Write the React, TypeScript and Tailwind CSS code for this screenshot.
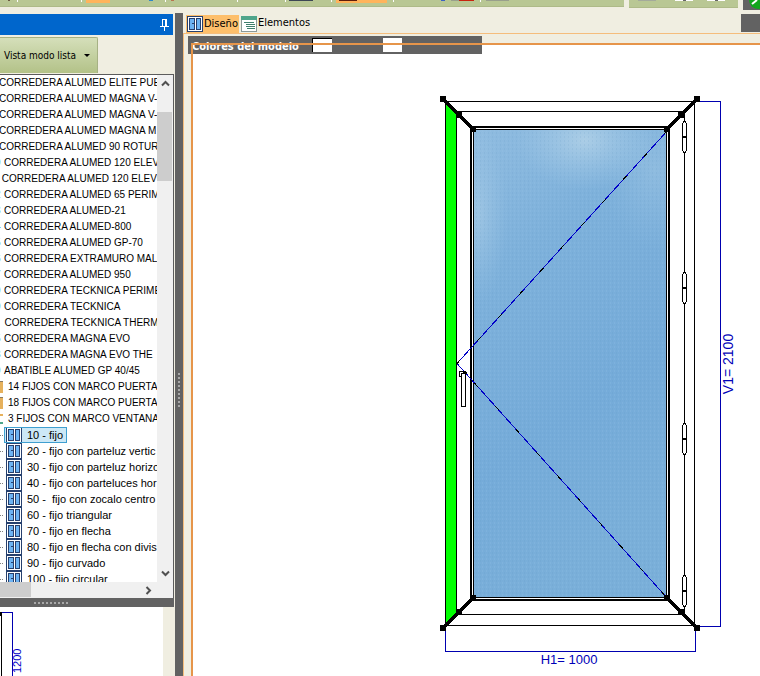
import type { ReactNode } from "react";

const seriesRows = [
  { num: "", name: "CORREDERA ALUMED ELITE PUE" },
  { num: "", name: "CORREDERA ALUMED MAGNA V-" },
  { num: "", name: "CORREDERA ALUMED MAGNA V-" },
  { num: "", name: "CORREDERA ALUMED MAGNA M" },
  { num: "", name: "CORREDERA ALUMED 90 ROTUR" },
  { num: "9", name: "CORREDERA ALUMED 120 ELEV" },
  { num: "", name: " CORREDERA ALUMED 120 ELEV" },
  { num: "2", name: "CORREDERA ALUMED 65 PERIM" },
  { num: "3", name: "CORREDERA ALUMED-21" },
  { num: "4", name: "CORREDERA ALUMED-800" },
  { num: "5", name: "CORREDERA ALUMED GP-70" },
  { num: "6", name: "CORREDERA EXTRAMURO MAL" },
  { num: "7", name: "CORREDERA ALUMED 950" },
  { num: "9", name: "CORREDERA TECKNICA PERIME" },
  { num: "9", name: "CORREDERA TECKNICA" },
  { num: "", name: "  CORREDERA TECKNICA THERMI" },
  { num: "5", name: "CORREDERA MAGNA EVO" },
  { num: "3", name: "CORREDERA MAGNA EVO THE" },
  { num: "9", name: "ABATIBLE ALUMED GP 40/45" },
];

const folderRows = [
  { name: "14 FIJOS CON MARCO PUERTA", open: false },
  { name: "18 FIJOS CON MARCO PUERTA", open: false },
  { name: "3 FIJOS CON MARCO VENTANA", open: true },
];

const modelRows = [
  "10 - fijo",
  "20 - fijo con parteluz vertic",
  "30 - fijo con parteluz horizo",
  "40 - fijo con parteluces hor",
  "50 -  fijo con zocalo centro",
  "60 - fijo triangular",
  "70 - fijo en flecha",
  "80 - fijo en flecha con divis",
  "90 - fijo curvado",
  "100 - fijo circular",
];

function WindowIcon() {
  return (
    <svg width="16" height="16" viewBox="0 0 16 16" shapeRendering="crispEdges" className="shrink-0" aria-hidden="true">
      <rect width="16" height="16" fill="#26406e" />
      <rect x="1" y="1" width="14" height="14" fill="#ffffff" />
      <rect x="2" y="2" width="6" height="12" fill="#26406e" />
      <rect x="3" y="3" width="4" height="10" fill="#6db3f2" />
      <rect x="9" y="2" width="5" height="12" fill="#26406e" />
      <rect x="10" y="3" width="3" height="10" fill="#6db3f2" />
      <rect x="5" y="7" width="2" height="1" fill="#26406e" />
    </svg>
  );
}

function ListIcon() {
  return (
    <svg width="16" height="16" viewBox="0 0 16 16" shapeRendering="crispEdges" className="shrink-0" aria-hidden="true">
      <rect width="16" height="16" fill="#8d9a98" />
      <rect x="1" y="4" width="14" height="11" fill="#ffffff" />
      <rect width="16" height="4" fill="#4fa58b" />
      <path d="M3 6.5h10M5 8.5h9M5 10.5h9M6 12.5h8" stroke="#3f7f6d" fill="none" />
    </svg>
  );
}

function Chevron({ d }: { d: string }) {
  return (
    <svg width="9" height="9" viewBox="0 0 9 9" aria-hidden="true">
      <path d={d} fill="none" stroke="#505050" strokeWidth="2" />
    </svg>
  );
}

function Separator({ className }: { className: string }) {
  return <span className={`h-[2px] w-px shrink-0 bg-white ${className}`} />;
}

function TopToolbar() {
  return (
    <header className="flex h-[10px] shrink-0 items-start overflow-hidden">
      <div className="flex h-[7px] min-w-0 flex-1 items-start border-b border-[#aeba88] bg-[#b9c794]">
        <span className="ml-2 h-px w-[2px] shrink-0 bg-[#6b5a40]" />
        <Separator className="ml-[7px]" />
        <Separator className="ml-[63px]" />
        <span className="ml-[4px] h-[3px] w-[24px] shrink-0 bg-[#ffb45c]" />
        <span className="ml-[39px] h-px w-[4px] shrink-0 bg-[#2e86c8]" />
        <Separator className="ml-[12px]" />
        <span className="ml-[5px] h-px w-[3px] shrink-0 bg-[#b8734f]" />
        <Separator className="ml-[63px]" />
        <Separator className="ml-[47px]" />
        <span className="ml-[3px] h-px w-[24px] shrink-0 bg-[#3d4654]" />
        <Separator className="ml-[18px]" />
        <span className="ml-[4px] h-[3px] w-[51px] shrink-0 bg-[#ffb45c]">
          <span className="ml-[3px] block h-px w-[18px] bg-[#5f1b08]" />
        </span>
        <Separator className="ml-[6px]" />
        <span className="ml-[47px] h-px w-[4px] shrink-0 bg-[#3b62c4]" />
        <span className="ml-[6px] h-px w-[8px] shrink-0 bg-[#98a08c]" />
        <span className="h-px w-[15px] shrink-0 bg-[#c8240e]" />
        <Separator className="ml-[6px]" />
        <span className="ml-[5px] h-px w-[23px] shrink-0 bg-[#999f8c]" />
      </div>
      <div className="ml-[5px] flex h-[8px] w-[109px] shrink-0 items-start border-b border-[#aeba88] bg-[#b9c794]">
        <span className="ml-[9px] h-px w-[18px] bg-[#a4aa9b]" />
        <span className="ml-[19px] flex h-px w-[18px] justify-center bg-white">
          <span className="h-px w-[3px] bg-[#666666]" />
        </span>
        <span className="ml-[14px] flex h-px w-[18px] justify-center bg-white">
          <span className="h-px w-[3px] bg-[#666666]" />
        </span>
      </div>
      <div className="ml-[5px] flex h-[10px] w-[17px] shrink-0 justify-end bg-[#626262]">
        <svg width="11" height="10" viewBox="0 0 11 10" aria-hidden="true">
          <circle cx="9" cy="0" r="9" fill="#12a51c" />
          <path d="M3 4L8 0" stroke="#ffffff" strokeWidth="2" />
        </svg>
      </div>
    </header>
  );
}

function TreeRow({ children }: { children: ReactNode }) {
  return <li className="flex h-4 items-center whitespace-pre">{children}</li>;
}

function SeriesTree() {
  return (
    <div className="flex min-h-0 flex-1 flex-col border-t border-r border-[#5c5c5c] bg-white">
      <div className="flex min-h-0 flex-1">
        <div className="min-w-0 flex-1 overflow-hidden font-['Liberation_Sans',Arial,sans-serif] leading-4 text-black">
          <ul className="text-[10px]">
            {seriesRows.map((row, i) => (
              <TreeRow key={i}>
                {row.num ? (
                  <span className="-ml-[5px] w-[9px] shrink-0 text-[#2f7fb5]">{row.num}</span>
                ) : (
                  <span className="-ml-px" />
                )}
                <span>{row.name}</span>
              </TreeRow>
            ))}
            {folderRows.map((row) => (
              <TreeRow key={row.name}>
                {row.open ? (
                  <span className="mr-[5px] h-[10px] w-[3px] shrink-0 border-y-2 border-t-[#e6b15c] border-b-[#4fa58b]" />
                ) : (
                  <span className="mr-[5px] h-3 w-[3px] shrink-0 border-t border-[#8a7a60] bg-[#e6b15c]" />
                )}
                <span>{row.name}</span>
              </TreeRow>
            ))}
          </ul>
          <ul className="text-[11px]">
            {modelRows.map((name, i) => (
              <TreeRow key={name}>
                <span className="mr-px w-[3px] shrink-0 border-t border-dotted border-[#808080]" />
                <span
                  className={
                    i === 0
                      ? "flex h-4 items-center bg-[#cce8f6] pl-[2px] pr-[4px] outline -outline-offset-1 outline-[#3f9fd0]"
                      : "flex h-4 items-center pl-[2px]"
                  }
                >
                  <WindowIcon />
                  <span className="ml-[5px]">{name}</span>
                </span>
              </TreeRow>
            ))}
          </ul>
        </div>
        <div className="flex w-4 shrink-0 flex-col bg-[#f0f0f0]">
          <button type="button" aria-label="Subir" className="flex h-[17px] items-center justify-center">
            <Chevron d="M1 6.5L4.5 3L8 6.5" />
          </button>
          <div className="mt-5 h-[69px] w-[15px] bg-[#cdcdcd]" />
          <button type="button" aria-label="Bajar" className="mt-auto flex h-[17px] items-center justify-center">
            <Chevron d="M1 2.5L4.5 6L8 2.5" />
          </button>
        </div>
      </div>
      <div className="flex h-4 shrink-0 bg-[#f0f0f0] pr-4">
        <div className="h-[15px] w-[31px] bg-[#cdcdcd]" />
        <button type="button" aria-label="Derecha" className="ml-auto flex w-[17px] items-center justify-center">
          <Chevron d="M2.5 1L6 4.5L2.5 8" />
        </button>
      </div>
    </div>
  );
}

function SidePanel() {
  return (
    <aside className="flex w-[174px] shrink-0 flex-col pt-1">
      <div className="mr-px flex h-[21px] shrink-0 items-center justify-end bg-[#0066cc] pr-[3px]">
        <button type="button" aria-label="Fijar panel">
          <svg width="11" height="13" viewBox="0 0 11 13" shapeRendering="crispEdges" className="block" aria-hidden="true">
            <path d="M3.5 8V1.5H7.5V8M1 8.5H10M5.5 9V13" fill="none" stroke="#ffffff" />
            <path d="M6.5 1V8" stroke="#ffffff" />
          </svg>
        </button>
      </div>
      <div className="h-[39px] shrink-0 pt-[2px]">
        <button
          type="button"
          className="flex h-9 w-[98px] items-center gap-[8px] rounded-tr-[2px] border-t border-r border-[#a6b184] bg-linear-to-b from-[#d5dfba] to-[#b3c288] pl-1 font-['DejaVu_Sans_Condensed','DejaVu_Sans',sans-serif] text-[10px] whitespace-nowrap text-black"
        >
          Vista modo lista
          <svg width="6" height="3" viewBox="0 0 6 3" className="shrink-0" aria-hidden="true">
            <path d="M0 0H6L3 3Z" fill="#000000" />
          </svg>
        </button>
      </div>
      <SeriesTree />
      <div className="flex h-[9px] shrink-0 items-center bg-[#626262] pl-[34px]">
        <div className="h-[2px] w-[34px] bg-[repeating-linear-gradient(90deg,#a8a8a8_0_2px,transparent_2px_4px)]" />
      </div>
      <div className="mr-[11px] h-[69px] shrink-0 overflow-hidden bg-white">
        <svg width="163" height="69" viewBox="0 607 163 69" className="block">
          <g shapeRendering="crispEdges">
            <path d="M1.5 614V676" stroke="#000000" />
            <rect x="0" y="612" width="2" height="4" fill="#000000" />
            <path d="M2 612.5H12.5V676" fill="none" stroke="#0000b0" />
          </g>
          <text
            transform="translate(21 673) rotate(-90)"
            className="fill-[#0000c8] font-['Liberation_Sans',Arial,sans-serif] text-[11px]"
          >
            1200
          </text>
        </svg>
      </div>
    </aside>
  );
}

const corners = [
  [443, 99],
  [459, 115],
  [473, 129],
  [697, 99],
  [681, 115],
  [667, 129],
  [443, 628],
  [459, 612],
  [473, 598],
  [697, 628],
  [681, 612],
  [667, 598],
];

const hinges = [121, 272, 423, 575];

function WindowDrawing() {
  return (
    <svg width="567" height="631" viewBox="193 45 567 631" className="block" role="img" aria-label="Modelo de ventana">
      <defs>
        <linearGradient id="glass" x1="0" y1="0" x2="0.3" y2="1">
          <stop offset="0" stopColor="#90bce0" />
          <stop offset="0.3" stopColor="#7eb1db" />
          <stop offset="0.7" stopColor="#75abd9" />
          <stop offset="1" stopColor="#7aafd9" />
        </linearGradient>
        <radialGradient id="glow">
          <stop offset="0" stopColor="#bcd8ea" stopOpacity="0.7" />
          <stop offset="1" stopColor="#a8cde8" stopOpacity="0" />
        </radialGradient>
        <pattern id="weave" width="4" height="4" patternUnits="userSpaceOnUse">
          <rect width="1" height="2" fill="#5c93c4" fillOpacity="0.14" />
          <rect x="2" y="2" width="1" height="2" fill="#a5cdec" fillOpacity="0.16" />
        </pattern>
        <clipPath id="pane">
          <rect x="474" y="130" width="192" height="467" />
        </clipPath>
      </defs>

      <g clipPath="url(#pane)">
        <rect x="474" y="130" width="192" height="467" fill="url(#glass)" />
        <ellipse cx="585" cy="140" rx="70" ry="50" fill="url(#glow)" />
        <ellipse cx="478" cy="215" rx="30" ry="90" fill="url(#glow)" opacity="0.6" />
        <ellipse cx="655" cy="170" rx="50" ry="80" fill="url(#glow)" opacity="0.4" />
        <rect x="474" y="130" width="192" height="467" fill="url(#weave)" />
      </g>

      <g shapeRendering="crispEdges" fill="none" stroke="#000000">
        <path d="M446 102L457 112V615L446 626Z" fill="#00ff00" stroke="none" />
        <rect x="445.5" y="101.5" width="249" height="524" />
        <path d="M456.5 111.5H684.5V614.5H456.5Z" />
        <rect x="471" y="127" width="198" height="473" strokeWidth="2" />
        <rect x="473.5" y="129.5" width="193" height="468" />
        <path d="M443 99L473 129M697 99L667 129M443 628L473 598M697 628L667 598" strokeWidth="3" />
        <path d="M668 130L457 363.5L668 599" stroke="#0000c8" />
        <path d="M668 130L457 363.5L668 599" strokeDasharray="5 26" />
        {hinges.map((y) => (
          <g key={y} fill="#ffffff">
            <path d={`M683.5 ${y + 0.5}H685.5L686.5 ${y + 3}V${y + 15.5}H682.5V${y + 3}Z`} />
            <path d={`M682.5 ${y + 16.5}H686.5V${y + 29}L685.5 ${y + 31.5}H683.5L682.5 ${y + 29}Z`} />
          </g>
        ))}
        <rect x="459.5" y="371.5" width="6" height="5" />
        <rect x="461.5" y="373.5" width="4" height="33" fill="#ffffff" />
        <path d="M463 372.5H467" strokeWidth="2" />
        <path d="M697 101.5H720.5V626.5H697M445.5 629V651.5H695.5V630" stroke="#0000b0" />
      </g>
      <g shapeRendering="crispEdges">
        {corners.map(([x, y]) => (
          <rect key={`${x}-${y}`} x={x - 3} y={y - 3} width="6" height="6" fill="#000000" />
        ))}
      </g>
      <g className="fill-[#0000b8] font-['Liberation_Sans',Arial,sans-serif]">
        <text x="569" y="664" textAnchor="middle" className="text-[13px]">
          H1= 1000
        </text>
        <text transform="translate(733 364) rotate(-90)" textAnchor="middle" className="text-[14px]">
          V1= 2100
        </text>
      </g>
    </svg>
  );
}

function DesignArea() {
  return (
    <main className="flex min-w-0 flex-1 flex-col">
      <div className="flex h-[23px] shrink-0 items-end pt-[4px]">
        <div className="flex h-full items-start pl-[3px] font-['DejaVu_Sans_Condensed','DejaVu_Sans',sans-serif] text-[11px] leading-4 text-black">
          <button type="button" className="mt-px flex h-[18px] items-center gap-px bg-[#fdbf6b] px-px">
            <WindowIcon />
            Diseño
          </button>
          <button type="button" className="ml-[2px] mt-[2px] flex items-start gap-px">
            <ListIcon />
            <span className="-mt-px">Elementos</span>
          </button>
        </div>
        <div className="mb-px ml-auto h-[18px] w-[19px] bg-[#626262]" />
      </div>
      <section className="flex min-h-0 flex-1 flex-col border-t border-l border-[#f5bd7c] pt-[9px] pl-[7px]">
        <div className="relative min-h-0 flex-1 bg-white">
          <div className="absolute -top-[7px] -left-[3px] flex h-[18px] w-[294px] items-center bg-[#626262] pl-1">
            <span className="w-[120px] pt-[3px] font-['DejaVu_Sans_Condensed','DejaVu_Sans',sans-serif] text-[11px] leading-4 font-bold whitespace-nowrap text-white">
              Colores del modelo
            </span>
            <button type="button" aria-label="Color exterior" className="h-[14px] w-5 border-t border-l border-black bg-white" />
            <button type="button" aria-label="Color interior" className="ml-[51px] h-[14px] w-[19px] bg-white" />
          </div>
          <div className="relative h-full overflow-hidden border-t-2 border-l-2 border-[#e6954a]">
            <WindowDrawing />
          </div>
        </div>
      </section>
    </main>
  );
}

export default function App() {
  return (
    <div className="flex h-screen w-full flex-col overflow-hidden bg-[#f0eee1]">
      <TopToolbar />
      <div className="flex min-h-0 flex-1">
        <SidePanel />
        <div className="mt-[3px] ml-px flex w-2 shrink-0 items-start justify-center bg-[#626262] pt-[360px]">
          <div className="h-[34px] w-[2px] bg-[repeating-linear-gradient(180deg,#a8a8a8_0_2px,transparent_2px_4px)]" />
        </div>
        <DesignArea />
      </div>
    </div>
  );
}
